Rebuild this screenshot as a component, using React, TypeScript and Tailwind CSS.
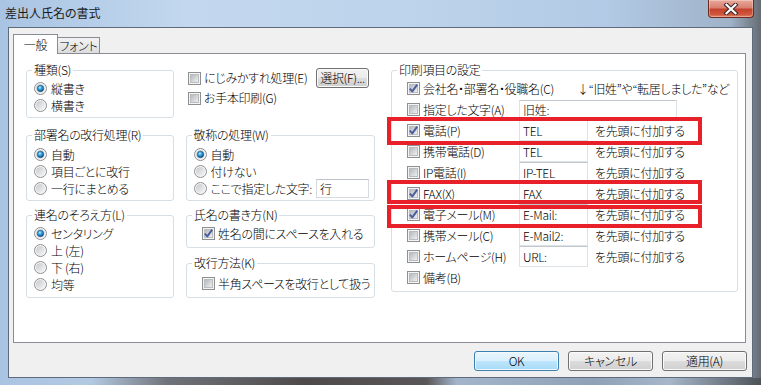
import type { ReactNode } from 'react'

const FONT = "font-['Noto_Sans_CJK_JP',sans-serif] font-light tracking-[-0.3px] [font-feature-settings:'palt']"

type Item = {
  label: string
  checked?: boolean
  note?: string
  field?: string
  wide?: boolean
  suffix?: boolean
}

const PRINT_ITEMS: Item[] = [
  { label: '会社名・部署名・役職名(C)', checked: true, note: '↓“旧姓”や“転居しました”など' },
  { label: '指定した文字(A)', field: '旧姓:', wide: true },
  { label: '電話(P)', checked: true, field: 'TEL', suffix: true },
  { label: '携帯電話(D)', field: 'TEL', suffix: true },
  { label: 'IP電話(I)', field: 'IP-TEL', suffix: true },
  { label: 'FAX(X)', checked: true, field: 'FAX', suffix: true },
  { label: '電子メール(M)', checked: true, field: 'E-Mail:', suffix: true },
  { label: '携帯メール(C)', field: 'E-Mail2:', suffix: true },
  { label: 'ホームページ(H)', field: 'URL:', suffix: true },
  { label: '備考(B)' },
]

function Radio({ checked = false }: { checked?: boolean }) {
  return (
    <svg width="13" height="13" viewBox="0 0 13 13" className="shrink-0">
      <defs>
        <linearGradient id="radio-bg" x1="0" y1="0" x2="1" y2="1">
          <stop offset="0" stopColor="#c4c8cd" />
          <stop offset="1" stopColor="#f8f8f8" />
        </linearGradient>
        <radialGradient id="radio-dot" cx="0.4" cy="0.35" r="0.7">
          <stop offset="0" stopColor="#b8edff" />
          <stop offset="0.45" stopColor="#2d9de0" />
          <stop offset="1" stopColor="#0d4a78" />
        </radialGradient>
      </defs>
      <circle cx="6.5" cy="6.5" r="6" fill="#f5f5f5" stroke="#8c8f92" />
      <circle cx="6.5" cy="6.5" r="4.5" fill="url(#radio-bg)" />
      {checked && <circle cx="6.5" cy="6.5" r="3.2" fill="url(#radio-dot)" stroke="#1a4c76" strokeWidth="0.6" />}
    </svg>
  )
}

function Check({ checked = false }: { checked?: boolean }) {
  return (
    <svg width="13" height="13" viewBox="0 0 13 13" className="shrink-0">
      <defs>
        <linearGradient id="check-bg" x1="0" y1="0" x2="1" y2="1">
          <stop offset="0" stopColor="#b1b5ba" />
          <stop offset="1" stopColor="#f3f3f3" />
        </linearGradient>
      </defs>
      <rect x="0.5" y="0.5" width="12" height="12" fill="#f4f4f4" stroke="#8e8f8f" />
      <rect x="2.5" y="2.5" width="8" height="8" fill="url(#check-bg)" stroke="#b9bcc0" />
      {checked && (
        <path d="M2.8 6.6 L5.3 9.4 L10.2 2.6" fill="none" stroke="#4a5c9b" strokeWidth="1.9" strokeLinejoin="round" />
      )}
    </svg>
  )
}

function Group({ title, className, children }: { title: string; className: string; children: ReactNode }) {
  return (
    <fieldset className={`rounded-[3px] border border-[#d5dfe5] ${className}`}>
      <legend className="ml-[5px] px-[2px] leading-[16px]">{title}</legend>
      {children}
    </fieldset>
  )
}

function RadioRow({ label, checked, children }: { label: string; checked?: boolean; children?: ReactNode }) {
  return (
    <div className="flex h-[17px] items-center gap-[4px] pl-[7px]">
      <Radio checked={checked} />
      <span className="whitespace-nowrap">{label}</span>
      {children}
    </div>
  )
}

function CheckRow({ label, checked }: { label: string; checked?: boolean }) {
  return (
    <div className="flex h-[17px] items-center gap-[3px] pl-[15px]">
      <Check checked={checked} />
      <span className="whitespace-nowrap">{label}</span>
    </div>
  )
}

function Button({ label, primary = false }: { label: string; primary?: boolean }) {
  return (
    <div
      className={
        primary
          ? 'flex h-[20px] w-[85px] items-center justify-center rounded-[3px] border border-[#3c7fb1] bg-[linear-gradient(to_bottom,#eaf6fd_0%,#d9f0fc_50%,#bee6fd_50%,#a7d9f5_100%)] shadow-[inset_0_0_0_1px_#f4fbff]'
          : 'flex h-[20px] w-[85px] items-center justify-center rounded-[3px] border border-[#707070] bg-[linear-gradient(to_bottom,#f2f2f2_0%,#ebebeb_50%,#dddddd_50%,#cfcfcf_100%)] shadow-[inset_0_0_0_1px_#fbfbfb]'
      }
    >
      {label}
    </div>
  )
}

export default function App() {
  return (
    <div
      className={`relative h-[385px] w-[761px] overflow-hidden bg-[linear-gradient(90deg,#a9c4e3_0%,#c3d8ee_25%,#bdd3eb_55%,#b2cae5_80%,#9fb2c8_96%,#666b72_100%)] text-[12px] leading-[16px] text-black ${FONT}`}
    >
      {/* title bar */}
      <div className="flex h-[27px] items-start">
        <span className="ml-[5px] mt-[5px] font-normal tracking-normal text-[#1b1b1b]">差出人氏名の書式</span>
        <div className="ml-auto mr-[7px] flex h-[18px] w-[46px] items-center justify-center rounded-b-[4px] border border-t-0 border-[#6d2a22] bg-[linear-gradient(to_bottom,#e9a99c_0%,#d9806f_45%,#c4422d_55%,#cf573d_85%,#e3876a_100%)] shadow-[inset_0_0_0_1px_rgba(255,255,255,0.3)]">
          <svg width="16" height="12" viewBox="0 0 16 12">
            <path d="M3.5 1.8 L12.5 10.2 M12.5 1.8 L3.5 10.2" stroke="#3b2a2a" strokeWidth="4.2" strokeLinecap="square" />
            <path d="M3.5 1.8 L12.5 10.2 M12.5 1.8 L3.5 10.2" stroke="#ffffff" strokeWidth="2.2" strokeLinecap="square" />
          </svg>
        </div>
      </div>

      {/* client area */}
      <div className="ml-[8px] h-[351px] w-[745px] border border-[#5d6b7c] bg-[#f0f0f0] pl-[4px] pt-[6px]">
        {/* tabs */}
        <div className="flex h-[19px] items-end">
          <div className="relative z-10 -mb-px flex h-[20px] w-[45px] items-center justify-center border border-b-0 border-[#898c95] bg-white">
            一般
          </div>
          <div className="flex h-[16px] w-[42px] items-center justify-center border border-b-0 border-l-0 border-[#898c95] bg-[linear-gradient(to_bottom,#f3f3f3_0%,#e9e9e9_50%,#dcdcdc_100%)]">
            フォント
          </div>
        </div>

        <div className="flex h-[290px] w-[733px] border border-[#898c95] bg-white pl-[12px] pt-[8px]">
          {/* left columns */}
          <div className="flex w-[349px] flex-col">
            <div className="flex">
              <Group title="種類(S)" className="h-[56px] w-[148px] pt-[2px]">
                <RadioRow label="縦書き" checked />
                <RadioRow label="横書き" />
              </Group>
              <div className="ml-[14px] flex flex-col pt-[6px]">
                <div className="flex h-[20px] items-center gap-[3px]">
                  <Check />
                  <span className="whitespace-nowrap">にじみかすれ処理(E)</span>
                  <div className="ml-auto flex h-[20px] w-[53px] items-center justify-center rounded-[3px] border border-[#707070] bg-[linear-gradient(to_bottom,#f2f2f2_0%,#ebebeb_50%,#dddddd_50%,#cfcfcf_100%)] shadow-[inset_0_0_0_1px_#fbfbfb]">
                    選択(F)...
                  </div>
                </div>
                <div className="flex h-[20px] w-[181px] items-center gap-[3px]">
                  <Check />
                  <span className="whitespace-nowrap">お手本印刷(G)</span>
                </div>
              </div>
            </div>

            <div className="mt-[9px] flex">
              <Group title="部署名の改行処理(R)" className="h-[74px] w-[148px] pt-[3px]">
                <RadioRow label="自動" checked />
                <RadioRow label="項目ごとに改行" />
                <RadioRow label="一行にまとめる" />
              </Group>
              <Group title="敬称の処理(W)" className="ml-[12px] h-[74px] w-[189px] pt-[3px]">
                <RadioRow label="自動" checked />
                <RadioRow label="付けない" />
                <RadioRow label="ここで指定した文字:">
                  <div className="ml-auto mr-[5px] h-[19px] w-[53px] border border-[#d7dbe0] border-t-[#bcc1c7] bg-white pl-[3px] leading-[17px]">
                    行
                  </div>
                </RadioRow>
              </Group>
            </div>

            <div className="mt-[6px] flex">
              <Group title="連名のそろえ方(L)" className="h-[91px] w-[148px] pt-[2px]">
                <RadioRow label="センタリング" checked />
                <RadioRow label="上 (左)" />
                <RadioRow label="下 (右)" />
                <RadioRow label="均等" />
              </Group>
              <div className="ml-[12px] flex flex-col">
                <Group title="氏名の書き方(N)" className="h-[41px] w-[189px] pt-[2px]">
                  <CheckRow label="姓名の間にスペースを入れる" checked />
                </Group>
                <Group title="改行方法(K)" className="mt-[7px] h-[43px] w-[189px] pt-[4px]">
                  <CheckRow label="半角スペースを改行として扱う" />
                </Group>
              </div>
            </div>
          </div>

          {/* print items */}
          <Group title="印刷項目の設定" className="ml-[16px] h-[230px] w-[347px]">
            {PRINT_ITEMS.map(item => (
              <div key={item.label} className="flex h-[21px] items-center pl-[15px]">
                <div className={item.note ? 'flex w-[170px] items-center gap-[3px]' : 'flex w-[112px] items-center gap-[3px]'}>
                  <Check checked={item.checked} />
                  <span className="whitespace-nowrap">{item.label}</span>
                </div>
                {item.note && <span className="whitespace-nowrap">{item.note}</span>}
                {item.field && (
                  <div
                    className={
                      item.wide
                        ? 'h-[19px] w-[158px] border border-[#dde2e7] border-t-[#c3c8ce] bg-white pl-[3px] leading-[17px]'
                        : 'h-[21px] w-[69px] border border-[#dde2e7] border-t-[#c3c8ce] bg-white pl-[3px] leading-[19px]'
                    }
                  >
                    {item.field}
                  </div>
                )}
                {item.suffix && <span className="ml-[7px] whitespace-nowrap">を先頭に付加する</span>}
              </div>
            ))}
          </Group>
        </div>

        <div className="mt-[8px] flex w-[734px] justify-end gap-[9px]">
          <Button label="OK" primary />
          <Button label="キャンセル" />
          <Button label="適用(A)" />
        </div>
      </div>

      {/* bottom frame */}
      <div className="h-[7px] bg-[linear-gradient(90deg,#a9c4e3_0%,#b3c9e2_12%,#6f7379_22%,#4f4a4a_40%,#5a5556_56%,#a3b5ca_60%,#8fa1b6_78%,#a6b7ca_88%,#4e5258_100%)]" />

      {/* annotation boxes */}
      <div className="absolute left-[387px] top-[117px] h-[28px] w-[315px] border-4 border-[#e8202a]" />
      <div className="absolute left-[387px] top-[180px] h-[24px] w-[315px] border-4 border-[#e8202a]" />
      <div className="absolute left-[387px] top-[205px] h-[23px] w-[315px] border-4 border-[#e8202a]" />
    </div>
  )
}
